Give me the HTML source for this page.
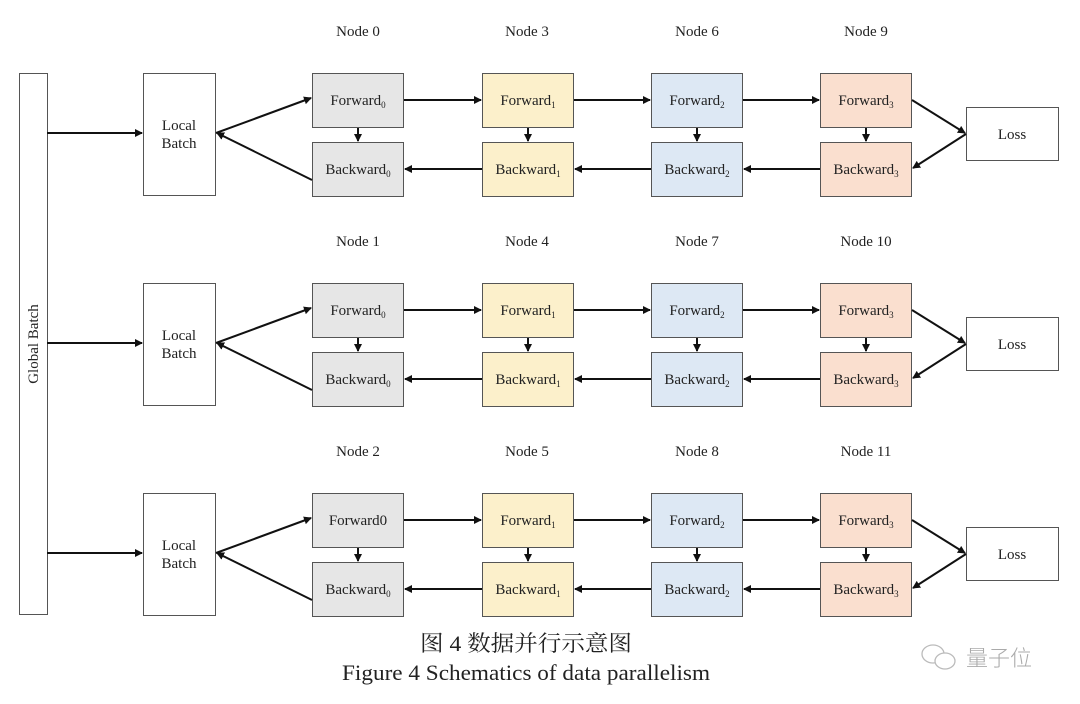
<!DOCTYPE html>
<html><head><meta charset="utf-8"><style>
html,body{margin:0;padding:0;background:#fff;width:1080px;height:704px;overflow:hidden}
svg text{font-family:"Liberation Serif","Noto Serif CJK SC",serif;fill:#222}
</style></head><body>
<svg width="1080" height="704" viewBox="0 0 1080 704" xmlns="http://www.w3.org/2000/svg">
<defs>
<marker id="a" markerWidth="8" markerHeight="8" refX="7" refY="4" orient="auto" markerUnits="userSpaceOnUse"><path d="M0,0 L8,4 L0,8 Z" fill="#111"/></marker>
<g id="rowshapes">
 <rect x="143.5" y="73.5" width="72" height="122" fill="#fff" stroke="#555"/>
 <rect x="312.5" y="73.5" width="91" height="54" fill="#e6e6e6" stroke="#555"/>
 <rect x="312.5" y="142.5" width="91" height="54" fill="#e6e6e6" stroke="#555"/>
 <rect x="482.5" y="73.5" width="91" height="54" fill="#fcf0cb" stroke="#555"/>
 <rect x="482.5" y="142.5" width="91" height="54" fill="#fcf0cb" stroke="#555"/>
 <rect x="651.5" y="73.5" width="91" height="54" fill="#dde8f4" stroke="#555"/>
 <rect x="651.5" y="142.5" width="91" height="54" fill="#dde8f4" stroke="#555"/>
 <rect x="820.5" y="73.5" width="91" height="54" fill="#fadfcf" stroke="#555"/>
 <rect x="820.5" y="142.5" width="91" height="54" fill="#fadfcf" stroke="#555"/>
 <rect x="966.5" y="107.5" width="92" height="53" fill="#fff" stroke="#555"/>
 <g stroke="#111" stroke-width="2" fill="none" marker-end="url(#a)">
  <line x1="47" y1="133" x2="142" y2="133"/>
  <line x1="216" y1="133" x2="311" y2="98"/>
  <line x1="312" y1="180" x2="217" y2="133"/>
  <line x1="404" y1="100" x2="481" y2="100"/>
  <line x1="574" y1="100" x2="650" y2="100"/>
  <line x1="743" y1="100" x2="819" y2="100"/>
  <line x1="482" y1="169" x2="405" y2="169"/>
  <line x1="651" y1="169" x2="575" y2="169"/>
  <line x1="820" y1="169" x2="744" y2="169"/>
  <line x1="358" y1="128" x2="358" y2="141"/>
  <line x1="528" y1="128" x2="528" y2="141"/>
  <line x1="697" y1="128" x2="697" y2="141"/>
  <line x1="866" y1="128" x2="866" y2="141"/>
  <line x1="912" y1="100" x2="965" y2="133"/>
  <line x1="966" y1="134" x2="913" y2="168"/>
 </g>
 <g font-size="15" text-anchor="middle">
  <text x="179" y="130">Local</text><text x="179" y="148">Batch</text>
  <text x="1012" y="139">Loss</text>
  <text x="358" y="105">Forward<tspan font-size="9" dy="3">0</tspan></text>
  <text x="358" y="174">Backward<tspan font-size="9" dy="3">0</tspan></text>
  <text x="528" y="105">Forward<tspan font-size="9" dy="3">1</tspan></text>
  <text x="528" y="174">Backward<tspan font-size="9" dy="3">1</tspan></text>
  <text x="697" y="105">Forward<tspan font-size="9" dy="3">2</tspan></text>
  <text x="697" y="174">Backward<tspan font-size="9" dy="3">2</tspan></text>
  <text x="866" y="105">Forward<tspan font-size="9" dy="3">3</tspan></text>
  <text x="866" y="174">Backward<tspan font-size="9" dy="3">3</tspan></text>
 </g>
</g>
</defs>
<rect x="19.5" y="73.5" width="28" height="541" fill="#fff" stroke="#555"/>
<text transform="translate(38,344) rotate(-90)" font-size="15" text-anchor="middle">Global Batch</text>

<use href="#rowshapes"/>
<use href="#rowshapes" transform="translate(0,210)"/>
<g transform="translate(0,420)">
 <rect x="143.5" y="73.5" width="72" height="122" fill="#fff" stroke="#555"/>
 <rect x="312.5" y="73.5" width="91" height="54" fill="#e6e6e6" stroke="#555"/>
 <rect x="312.5" y="142.5" width="91" height="54" fill="#e6e6e6" stroke="#555"/>
 <rect x="482.5" y="73.5" width="91" height="54" fill="#fcf0cb" stroke="#555"/>
 <rect x="482.5" y="142.5" width="91" height="54" fill="#fcf0cb" stroke="#555"/>
 <rect x="651.5" y="73.5" width="91" height="54" fill="#dde8f4" stroke="#555"/>
 <rect x="651.5" y="142.5" width="91" height="54" fill="#dde8f4" stroke="#555"/>
 <rect x="820.5" y="73.5" width="91" height="54" fill="#fadfcf" stroke="#555"/>
 <rect x="820.5" y="142.5" width="91" height="54" fill="#fadfcf" stroke="#555"/>
 <rect x="966.5" y="107.5" width="92" height="53" fill="#fff" stroke="#555"/>
 <g stroke="#111" stroke-width="2" fill="none" marker-end="url(#a)">
  <line x1="47" y1="133" x2="142" y2="133"/>
  <line x1="216" y1="133" x2="311" y2="98"/>
  <line x1="312" y1="180" x2="217" y2="133"/>
  <line x1="404" y1="100" x2="481" y2="100"/>
  <line x1="574" y1="100" x2="650" y2="100"/>
  <line x1="743" y1="100" x2="819" y2="100"/>
  <line x1="482" y1="169" x2="405" y2="169"/>
  <line x1="651" y1="169" x2="575" y2="169"/>
  <line x1="820" y1="169" x2="744" y2="169"/>
  <line x1="358" y1="128" x2="358" y2="141"/>
  <line x1="528" y1="128" x2="528" y2="141"/>
  <line x1="697" y1="128" x2="697" y2="141"/>
  <line x1="866" y1="128" x2="866" y2="141"/>
  <line x1="912" y1="100" x2="965" y2="133"/>
  <line x1="966" y1="134" x2="913" y2="168"/>
 </g>
 <g font-size="15" text-anchor="middle">
  <text x="179" y="130">Local</text><text x="179" y="148">Batch</text>
  <text x="1012" y="139">Loss</text>
  <text x="358" y="105">Forward0</text>
  <text x="358" y="174">Backward<tspan font-size="9" dy="3">0</tspan></text>
  <text x="528" y="105">Forward<tspan font-size="9" dy="3">1</tspan></text>
  <text x="528" y="174">Backward<tspan font-size="9" dy="3">1</tspan></text>
  <text x="697" y="105">Forward<tspan font-size="9" dy="3">2</tspan></text>
  <text x="697" y="174">Backward<tspan font-size="9" dy="3">2</tspan></text>
  <text x="866" y="105">Forward<tspan font-size="9" dy="3">3</tspan></text>
  <text x="866" y="174">Backward<tspan font-size="9" dy="3">3</tspan></text>
 </g>
</g>

<g font-size="15" text-anchor="middle">
 <text x="358" y="36">Node 0</text><text x="527" y="36">Node 3</text><text x="697" y="36">Node 6</text><text x="866" y="36">Node 9</text>
 <text x="358" y="246">Node 1</text><text x="527" y="246">Node 4</text><text x="697" y="246">Node 7</text><text x="866" y="246">Node 10</text>
 <text x="358" y="456">Node 2</text><text x="527" y="456">Node 5</text><text x="697" y="456">Node 8</text><text x="866" y="456">Node 11</text>
</g>

<text x="526" y="651" font-size="22" text-anchor="middle" textLength="212" lengthAdjust="spacingAndGlyphs">图 4  数据并行示意图</text>
<text x="526" y="680" font-size="22" text-anchor="middle" textLength="368" lengthAdjust="spacingAndGlyphs">Figure 4 Schematics of data parallelism</text>

<g fill="none" stroke="#bbb" stroke-width="1.3">
 <ellipse cx="933" cy="654" rx="11" ry="9"/>
 <ellipse cx="945" cy="661" rx="10" ry="8" fill="#fff"/>
</g>
<text x="966" y="666" font-size="22" style="fill:#aaa;font-family:'Noto Sans CJK SC',sans-serif;font-weight:300">量子位</text>
</svg>
</body></html>
